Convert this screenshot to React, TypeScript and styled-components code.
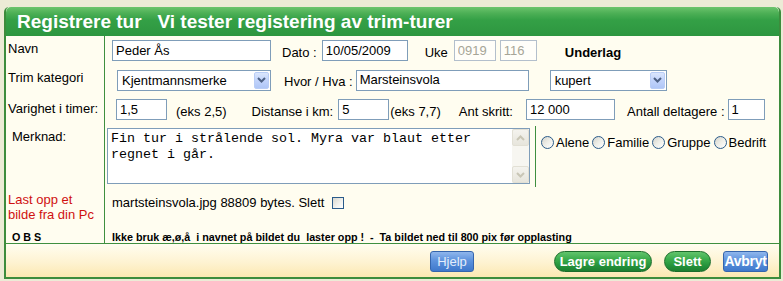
import * as React from "react";
import styled, { createGlobalStyle } from "styled-components";

const GlobalStyle = createGlobalStyle`
  html, body {
    margin: 0;
    padding: 0;
    background: #ecebd6;
    font-family: "Liberation Sans", Arial, sans-serif;
  }
`;

const Page = styled.div`
  padding: 7px 2px 0 4px;
`;

const Panel = styled.div`
  border: 2px solid #3d8c3d;
  border-top: none;
  border-radius: 5px 5px 0 0;
  overflow: hidden;
  background: #fffdf0;
`;

const Header = styled.div`
  height: 29px;
  display: flex;
  align-items: center;
  padding-left: 11px;
  background: linear-gradient(to bottom, #6cc46d 0%, #4caf55 22%, #34a046 45%, #2d9640 100%);
  border-radius: 5px 5px 0 0;
`;

const Title = styled.h1`
  margin: 0;
  font-size: 19px;
  font-weight: bold;
  color: #ffffff;
  white-space: pre;
`;

const FormRow = styled.div<{ $h: number }>`
  display: grid;
  grid-template-columns: 99px 1fr;
  height: ${(p) => p.$h}px;
`;

const LabelCell = styled.div<{ $pt: number; $pl?: number; $red?: boolean }>`
  border-right: 1px solid #3f8f3f;
  padding: ${(p) => p.$pt}px 0 0 ${(p) => p.$pl ?? 2}px;
  font-size: 13px;
  line-height: 15px;
  color: ${(p) => (p.$red ? "#d01010" : "#000")};
`;

const SmallBold = styled.div<{ $pt?: number }>`
  padding-top: ${(p) => p.$pt ?? 0}px;
  font-size: 10.75px;
  line-height: 12px;
  font-weight: bold;
  color: #000;
  white-space: pre;
`;

const FieldCell = styled.div<{ $pl: number; $top?: boolean }>`
  display: flex;
  align-items: ${(p) => (p.$top ? "flex-start" : "center")};
  padding-left: ${(p) => p.$pl}px;
  min-width: 0;
`;

const Text = styled.span<{ $ml?: number; $bold?: boolean }>`
  margin-left: ${(p) => p.$ml ?? 0}px;
  padding-top: 3px;
  font-size: 13px;
  font-weight: ${(p) => (p.$bold ? "bold" : "normal")};
  white-space: nowrap;
  color: #000;
`;

const Field = styled.input<{ $w: number; $ml?: number }>`
  box-sizing: border-box;
  width: ${(p) => p.$w}px;
  height: 21px;
  margin: 0 0 0 ${(p) => p.$ml ?? 0}px;
  padding: 0 2px 1px 3px;
  border: 1px solid #7f9db9;
  background: #fff;
  font-family: "Liberation Sans", Arial, sans-serif;
  font-size: 13px;
  color: #000;
  outline: none;
  &:disabled {
    border-color: #b3bfcc;
    color: #a6a597;
    background: #fffef9;
  }
`;

const SelectBox = styled.div<{ $w: number; $ml?: number }>`
  box-sizing: border-box;
  width: ${(p) => p.$w}px;
  height: 21px;
  margin-left: ${(p) => p.$ml ?? 0}px;
  border: 1px solid #7f9db9;
  background: #fff;
  display: flex;
  align-items: center;
  justify-content: space-between;
  padding: 0 1px 0 4px;
  font-size: 13px;
`;

const DropButton = styled.div`
  width: 15px;
  height: 17px;
  box-sizing: border-box;
  border: 1px solid #b9cdf6;
  border-radius: 2px;
  background: linear-gradient(to bottom, #dbe6fd 0%, #c1d3fb 50%, #afc6f7 100%);
  display: flex;
  align-items: center;
  justify-content: center;
`;

const TextBox = styled.div`
  box-sizing: border-box;
  width: 423px;
  height: 56px;
  margin: 4px 0 0 2px;
  border: 1px solid #7f9db9;
  background: #fff;
  display: flex;
`;

const Memo = styled.textarea`
  flex: 1;
  border: none;
  outline: none;
  resize: none;
  overflow: hidden;
  margin: 0;
  padding: 2px 3px;
  font-family: "Liberation Mono", "Courier New", monospace;
  font-size: 13.33px;
  line-height: 16px;
  color: #000;
  background: #fff;
`;

const ScrollBar = styled.div`
  width: 17px;
  display: flex;
  flex-direction: column;
  justify-content: space-between;
  background: #f7f6f1;
`;

const ScrollBtn = styled.div`
  height: 17px;
  box-sizing: border-box;
  border: 1px solid #e2e0d5;
  border-radius: 2px;
  background: linear-gradient(to bottom, #f4f3ee, #e7e5dc);
  display: flex;
  align-items: center;
  justify-content: center;
`;

const RadioCell = styled.div`
  align-self: stretch;
  margin: 2px 0 2px 5px;
  border-left: 1px solid #3f8f3f;
  padding: 9px 0 0 5px;
  display: flex;
  align-items: flex-start;
`;

const RadioItem = styled.label`
  display: flex;
  align-items: center;
  gap: 2px;
  margin-right: 3px;
  font-size: 13px;
  color: #000;
`;

const RadioDot = styled.span`
  box-sizing: border-box;
  width: 13px;
  height: 13px;
  border-radius: 50%;
  border: 1px solid #2a5b8a;
  background: linear-gradient(135deg, #d4d3cb 0%, #eeeee8 50%, #ffffff 100%);
`;

const CheckBox = styled.span`
  box-sizing: border-box;
  width: 12px;
  height: 12px;
  margin: 8px 0 0 8px;
  border: 1px solid #2a5b8a;
  background: linear-gradient(135deg, #d8d7cf 0%, #f2f2ee 60%, #ffffff 100%);
`;

const FileText = styled.span`
  padding-top: 6px;
  font-size: 13px;
  line-height: 15px;
  color: #000;
  white-space: nowrap;
`;

const Footer = styled.div`
  height: 32px;
  border-top: 1px solid #3f8f3f;
  background: linear-gradient(to bottom, #fffdf0 0%, #fef3d2 55%, #fce8b2 100%);
  display: flex;
  align-items: center;
  padding: 1px 0 0 424px;
`;

const BlueButton = styled.button<{ $w: number; $ml?: number; $bold?: boolean }>`
  box-sizing: border-box;
  width: ${(p) => p.$w}px;
  height: 21px;
  margin-left: ${(p) => p.$ml ?? 0}px;
  padding: 0;
  border: 1px solid #3565ad;
  border-radius: 3px;
  background: linear-gradient(to bottom, #8fb6ec 0%, #5d92dd 45%, #3f78cc 100%);
  color: ${(p) => (p.$bold ? "#ffffff" : "#e4edfb")};
  font-family: "Liberation Sans", Arial, sans-serif;
  font-size: ${(p) => (p.$bold ? 14 : 13)}px;
  font-weight: ${(p) => (p.$bold ? "bold" : "normal")};
  letter-spacing: ${(p) => (p.$bold ? "-0.3px" : "0")};
`;

const GreenButton = styled.button<{ $w: number; $ml?: number }>`
  box-sizing: border-box;
  width: ${(p) => p.$w}px;
  height: 21px;
  margin-left: ${(p) => p.$ml ?? 0}px;
  padding: 0;
  border: 1px solid #1b6d2b;
  border-radius: 11px;
  background: linear-gradient(to bottom, #62c46c 0%, #3aab4b 40%, #23913a 75%, #1d7f31 100%);
  color: #ffffff;
  font-family: "Liberation Sans", Arial, sans-serif;
  font-size: 13px;
  font-weight: bold;
`;

const Chevron = ({ color }: { color: string }) => (
  <svg width="9" height="6" viewBox="0 0 9 6">
    <path d="M1 1 L4.5 4.5 L8 1" fill="none" stroke={color} strokeWidth="2" />
  </svg>
);

const ChevronUp = ({ color }: { color: string }) => (
  <svg width="9" height="6" viewBox="0 0 9 6">
    <path d="M1 5 L4.5 1.5 L8 5" fill="none" stroke={color} strokeWidth="2" />
  </svg>
);

const Select = (props: { w: number; ml?: number; value: string }) => (
  <SelectBox $w={props.w} $ml={props.ml}>
    <span>{props.value}</span>
    <DropButton>
      <Chevron color="#4d6185" />
    </DropButton>
  </SelectBox>
);

const Radio = (props: { label: string }) => (
  <RadioItem>
    <RadioDot />
    {props.label}
  </RadioItem>
);

const App = () => {
  const noop = () => {};

  return (
    <>
      <GlobalStyle />
      <Page>
        <Panel>
          <Header>
            <Title>{"Registrere tur   Vi tester registering av trim-turer"}</Title>
          </Header>

          <FormRow $h={29}>
            <LabelCell $pt={5}>Navn</LabelCell>
            <FieldCell $pl={7}>
              <Field $w={159} value="Peder Ås" onChange={noop} />
              <Text $ml={11}>Dato :</Text>
              <Field $w={86} $ml={5} value="10/05/2009" onChange={noop} />
              <Text $ml={17}>Uke</Text>
              <Field $w={42} $ml={6} value="0919" disabled />
              <Field $w={37} $ml={4} value="116" disabled />
              <Text $ml={28} $bold>Underlag</Text>
            </FieldCell>
          </FormRow>

          <FormRow $h={30}>
            <LabelCell $pt={5}>Trim kategori</LabelCell>
            <FieldCell $pl={12}>
              <Select w={154} value="Kjentmannsmerke" />
              <Text $ml={13}>Hvor / Hva :</Text>
              <Field $w={173} $ml={3} value="Marsteinsvola" onChange={noop} />
              <Select w={117} ml={21} value="kupert" />
            </FieldCell>
          </FormRow>

          <FormRow $h={29}>
            <LabelCell $pt={6}>Varighet i timer:</LabelCell>
            <FieldCell $pl={11}>
              <Field $w={51} value="1,5" onChange={noop} />
              <Text $ml={9}>(eks 2,5)</Text>
              <Text $ml={25}>Distanse i km:</Text>
              <Field $w={51} $ml={5} value="5" onChange={noop} />
              <Text $ml={1}>(eks 7,7)</Text>
              <Text $ml={18}>Ant skritt:</Text>
              <Field $w={89} $ml={13} value="12 000" onChange={noop} />
              <Text $ml={12}>Antall deltagere :</Text>
              <Field $w={37} $ml={3} value="1" onChange={noop} />
            </FieldCell>
          </FormRow>

          <FormRow $h={65}>
            <LabelCell $pt={5} $pl={6}>Merknad:</LabelCell>
            <FieldCell $pl={0} $top>
              <TextBox>
                <Memo
                  value="Fin tur i strålende sol. Myra var blaut etter regnet i går."
                  onChange={noop}
                />
                <ScrollBar>
                  <ScrollBtn>
                    <ChevronUp color="#c9c6b6" />
                  </ScrollBtn>
                  <ScrollBtn>
                    <Chevron color="#c9c6b6" />
                  </ScrollBtn>
                </ScrollBar>
              </TextBox>
              <RadioCell>
                <Radio label="Alene" />
                <Radio label="Familie" />
                <Radio label="Gruppe" />
                <Radio label="Bedrift" />
              </RadioCell>
            </FieldCell>
          </FormRow>

          <FormRow $h={39}>
            <LabelCell $pt={3} $red>
              Last opp et
              <br />
              bilde fra din Pc
            </LabelCell>
            <FieldCell $pl={7} $top>
              <FileText>martsteinsvola.jpg 88809 bytes. Slett</FileText>
              <CheckBox />
            </FieldCell>
          </FormRow>

          <FormRow $h={15}>
            <LabelCell $pt={3} $pl={6}>
              <SmallBold>O B S</SmallBold>
            </LabelCell>
            <FieldCell $pl={7} $top>
              <SmallBold $pt={3}>
                {"Ikke bruk æ,ø,å  i navnet på bildet du  laster opp !  -  Ta bildet ned til 800 pix før opplasting"}
              </SmallBold>
            </FieldCell>
          </FormRow>

          <Footer>
            <BlueButton $w={44}>Hjelp</BlueButton>
            <GreenButton $w={98} $ml={80}>Lagre endring</GreenButton>
            <GreenButton $w={47} $ml={12}>Slett</GreenButton>
            <BlueButton $w={45} $ml={12} $bold>Avbryt</BlueButton>
          </Footer>
        </Panel>
      </Page>
    </>
  );
};

export default App;
